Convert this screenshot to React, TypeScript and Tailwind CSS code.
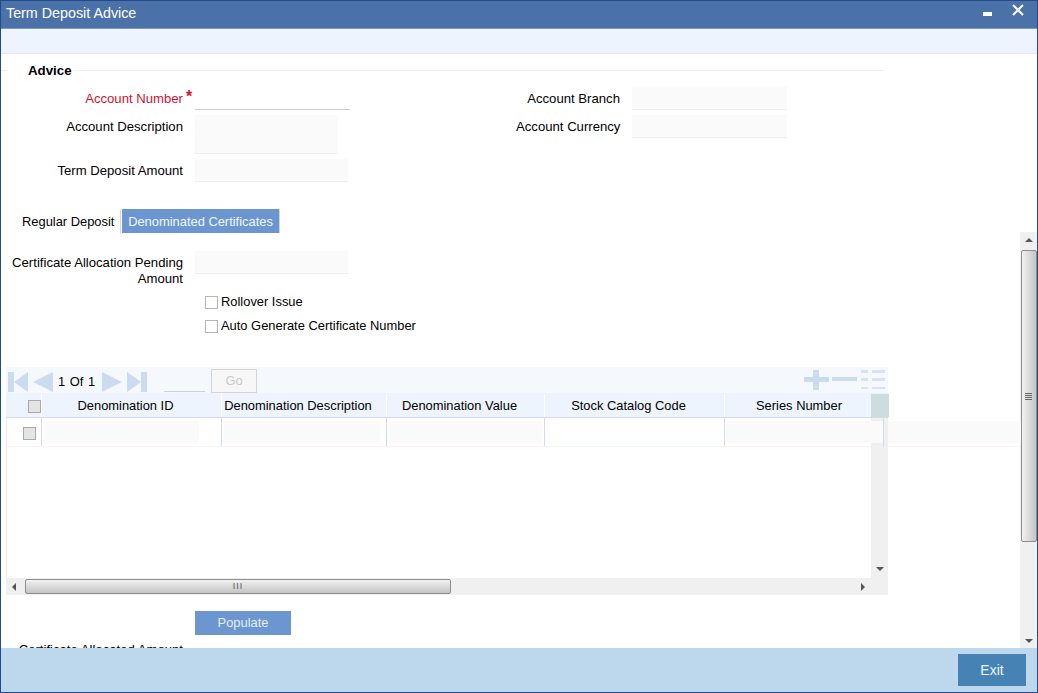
import React from "react";

const columns = [
  { name: "Denomination ID", width: "w-[180px]", input: "w-[155px]" },
  { name: "Denomination Description", width: "w-[165px]", input: "w-[156px]" },
  { name: "Denomination Value", width: "w-[158px]", input: "w-[153px]" },
  { name: "Stock Catalog Code", width: "w-[180px]", input: "w-0" },
];

const Label = ({ children, red }: { children: React.ReactNode; red?: boolean }) => (
  <div className={`w-[182px] shrink-0 text-right text-[13.15px] leading-4 ${red ? "text-[#d2122e]" : "text-black"}`}>{children}</div>
);

const ReadOnly = ({ className }: { className: string }) => (
  <div className={`shrink-0 border-b border-[#eeeeee] bg-[#fafafa] ${className}`} />
);

const Check = ({ className }: { className: string }) => (
  <div className={`h-[13px] w-[13px] shrink-0 border border-[#a9a9a9] ${className}`} />
);

const Triangle = ({ right }: { right?: boolean }) => (
  <svg width="20" height="20" viewBox="0 0 20 20" className="shrink-0">
    <path d={right ? "M0 0L20 10L0 20Z" : "M20 0L0 10L20 20Z"} fill="#cbdcf1" />
  </svg>
);

const EdgeIcon = ({ right }: { right?: boolean }) => (
  <svg width="20" height="20" viewBox="0 0 20 20" className="shrink-0">
    <path d={right ? "M0 0L14 10L0 20Z M14 0H20V20H14Z" : "M20 0L6 10L20 20Z M0 0H6V20H0Z"} fill="#cbdcf1" />
  </svg>
);

const Arrow = ({ dir }: { dir: "up" | "down" | "left" | "right" }) => {
  const d = {
    up: "M0 5L4 1L8 5Z",
    down: "M0 2H8L4 6Z",
    left: "M5 0V8L1 4Z",
    right: "M2 0V8L6 4Z",
  }[dir];
  return (
    <svg width="8" height="8" viewBox="0 0 8 8" className="shrink-0">
      <path d={d} fill="#555555" />
    </svg>
  );
};

const App = () => {
  return (
    <div
      className="flex h-[693px] w-[1038px] flex-col overflow-hidden border border-[#234a8a] bg-white text-[12.9px] text-black"
      style={{ fontFamily: '"Liberation Sans", Arial, sans-serif' }}
    >
      <header className="flex h-[28px] shrink-0 items-start justify-between border-b border-[#7f9ab3] bg-[#4a72a9] pl-[5px] pr-[13px]">
        <span className="mt-[3px] text-[14.3px] leading-[18px] text-white">Term Deposit Advice</span>
        <div className="flex items-start gap-[20px]">
          <div className="mt-[11px] h-[4px] w-[9px] bg-white" />
          <svg width="12" height="12" viewBox="0 0 12 12" className="mt-[3px]">
            <path d="M1 1L11 11M11 1L1 11" stroke="#ffffff" strokeWidth="2" />
          </svg>
        </div>
      </header>
      <div className="h-[25px] shrink-0 border-b border-[#e6e8ec] bg-[#edf4fd]" />

      <div className="flex min-h-0 flex-1 overflow-hidden">
        <main className="w-[1019px] shrink-0">
          <div className="mt-[10px] flex h-[14px] items-start">
            <div className="mt-[6px] h-px w-[6px] bg-[#eeeeee]" />
            <b className="ml-[21px] mr-[1px] text-[13.3px] leading-[14px]">Advice</b>
            <div className="mt-[6px] h-px w-[811px] bg-[#eeeeee]" />
          </div>

          <div className="mt-[9px] flex">
            <div className="w-[515px] shrink-0">
              <div className="flex h-[23px]">
                <Label red>
                  <span className="mt-[4px] block">Account Number</span>
                </Label>
                <span className="relative top-[1px] ml-[3px] w-[9px] text-[16px] font-bold leading-[18px] text-[#d2122e]">*</span>
                <div className="h-[23px] w-[155px] border-b border-[#cfcfcf]" />
              </div>
              <div className="mt-[5px] flex">
                <Label>
                  <span className="mt-[4px] block">Account Description</span>
                </Label>
                <ReadOnly className="ml-[12px] h-[39px] w-[143px]" />
              </div>
              <div className="mt-[5px] flex">
                <Label>
                  <span className="mt-[4px] block">Term Deposit Amount</span>
                </Label>
                <ReadOnly className="ml-[12px] h-[23px] w-[153px]" />
              </div>
            </div>
            <div>
              <div className="flex">
                <div className="mt-[4px] w-[104px] whitespace-nowrap text-right text-[13.15px] leading-4">Account Branch</div>
                <ReadOnly className="ml-[12px] h-[23px] w-[155px]" />
              </div>
              <div className="mt-[5px] flex">
                <div className="mt-[4px] w-[104px] whitespace-nowrap text-right text-[13.15px] leading-4">Account Currency</div>
                <ReadOnly className="ml-[12px] h-[23px] w-[155px]" />
              </div>
            </div>
          </div>

          <div className="mt-[27px] flex h-[24px] items-center">
            <span className="ml-[21px] w-[98px] pt-[1px]">Regular Deposit</span>
            <div className="h-[24px] w-px bg-[#d5d5d5]" />
            <div className="ml-[1px] flex h-[24px] w-[158px] items-center justify-center border-r border-[#d5d5d5] bg-[#6c96d0] pt-[1px] text-[#f2f6fc]">
              Denominated Certificates
            </div>
          </div>

          <div className="mt-[18px] flex">
            <Label>
              <div className="mt-[4px] whitespace-nowrap">
                Certificate Allocation Pending
                <br />
                Amount
              </div>
            </Label>
            <ReadOnly className="ml-[12px] h-[23px] w-[153px]" />
          </div>
          <div className="ml-[204px] mt-[8px] flex flex-col gap-[10px]">
            <label className="flex h-[14px] items-center gap-[3px]">
              <Check className="border-[#b5b5b5] bg-white" />
              <span>Rollover Issue</span>
            </label>
            <label className="flex h-[14px] items-center gap-[3px]">
              <Check className="border-[#b5b5b5] bg-white" />
              <span>Auto Generate Certificate Number</span>
            </label>
          </div>

          <section className="relative ml-[5px] mt-[34px] w-[882px]">
            <div className="flex h-[26px] items-start bg-[#f5f9fe] pl-[2px]">
              <div className="mt-[5px] flex items-center">
                <EdgeIcon />
                <div className="ml-[5px]"><Triangle /></div>
                <span className="ml-[5px] w-[39px] whitespace-nowrap leading-[20px] [word-spacing:1px]">1 Of 1</span>
                <div className="ml-[5px]"><Triangle right /></div>
                <div className="ml-[5px]"><EdgeIcon right /></div>
              </div>
              <div className="ml-[17px] mt-[24px] h-px w-[41px] bg-[#cfcfcf]" />
              <div className="ml-[6px] mt-[2px] flex h-[24px] w-[46px] items-center justify-center border border-[#d5d5d5] bg-[#f7f7f7] text-[#c8c8c8]">
                Go
              </div>
              <div className="ml-auto mr-[2px] mt-[3px] flex items-start gap-[3px]">
                <svg width="25" height="20" viewBox="0 0 25 20">
                  <path d="M0 7H9V0H15V7H25V12H15V20H9V12H0Z" fill="#cbdcf1" />
                </svg>
                <svg width="25" height="20" viewBox="0 0 25 20">
                  <path d="M0 7H25V11H0Z" fill="#cbdcf1" />
                </svg>
                <svg width="25" height="20" viewBox="0 0 25 20" className="ml-[1px]">
                  <path d="M0 0H7V3H0Z M11 0H24V3H11Z M0 8H7V11H0Z M11 8H24V11H11Z M0 17H7V19H0Z M11 17H24V19H11Z" fill="#d5e3f4" />
                </svg>
              </div>
            </div>

            <div className="flex h-[25px] border-b border-[#d3dcea] bg-[#edf4fd] pt-[1px]">
              <div className="flex w-[36px] shrink-0 items-center justify-end border-r border-white pt-[2px]">
                <Check className="border-[#888888] bg-[#e4e4e4]" />
              </div>
              {columns.map((col) => (
                <div key={col.name} className={`flex ${col.width} shrink-0 items-center justify-center border-r border-white pr-[12px]`}>
                  {col.name}
                </div>
              ))}
              <div className="flex w-[146px] shrink-0 items-center justify-center pl-[2px]">Series Number</div>
              <div className="w-[18px] shrink-0 bg-[#cddcdf]" />
            </div>

            <div className="relative h-[160px] border-l border-[#e8eaee]">
              <div className="flex h-[29px] w-[1014px] border-b border-[#fdf3ee]">
                <div className="flex w-[35px] shrink-0 items-center border-r border-[#d3dcea] pl-[16px] pt-[2px]">
                  <Check className="border-[#888888] bg-[#e4e4e4]" />
                </div>
                {columns.map((col) => (
                  <div key={col.name} className={`${col.width} shrink-0 border-r border-[#d3dcea] pl-[2px] pt-[3px]`}>
                    <div className={`h-[22px] ${col.input} bg-[#fafafa]`} />
                  </div>
                ))}
                <div className="flex-1 pl-[1px] pt-[3px]">
                  <div className="h-[22px] bg-[#fafafa]" />
                </div>
              </div>
              <div className="absolute bottom-0 right-0 top-0 flex w-[17px] flex-col items-center justify-end bg-[#f0f0f0] pb-[5px]">
                <div className="absolute left-[12px] top-0 h-[29px] w-px bg-[#d3dcea]" />
                <div className="absolute left-0 top-[3px] h-[22px] w-[12px] bg-[#fafafa]" />
                <Arrow dir="down" />
              </div>
            </div>

            <div className="flex h-[17px] items-center bg-[#f0f0f0] pl-[5px]">
              <Arrow dir="left" />
              <div className="ml-[6px] flex h-[15px] w-[426px] items-center justify-center rounded-[2px] border border-[#8e8e8e] bg-gradient-to-b from-[#f2f2f2] to-[#c4c4c4]">
                <span className="text-[9px] leading-none tracking-[1px] text-[#555555]">III</span>
              </div>
              <div className="ml-auto mr-[21px]"><Arrow dir="right" /></div>
            </div>
          </section>

          <div className="ml-[194px] mt-[16px] flex h-[24px] w-[96px] items-center justify-center bg-[#6c96d0] text-[#e6edf7]">
            Populate
          </div>
          <div className="mt-[7px] w-[182px] whitespace-nowrap text-right text-[13.15px] leading-4">Certificate Allocated Amount</div>
        </main>

        <aside className="mt-[178px] flex w-[17px] shrink-0 flex-col items-center bg-[#f0f0f0]">
          <div className="flex h-[18px] items-center justify-center"><Arrow dir="up" /></div>
          <div className="flex h-[292px] w-[16px] items-center justify-center rounded-[2px] border border-[#8e8e8e] bg-gradient-to-r from-[#f2f2f2] to-[#c4c4c4]">
            <span className="flex flex-col gap-[1px]">
              <i className="block h-px w-[7px] bg-[#666666]" />
              <i className="block h-px w-[7px] bg-[#666666]" />
              <i className="block h-px w-[7px] bg-[#666666]" />
              <i className="block h-px w-[7px] bg-[#666666]" />
            </span>
          </div>
          <div className="mb-[3px] mt-auto"><Arrow dir="down" /></div>
        </aside>
      </div>

      <footer className="flex h-[44px] shrink-0 items-start justify-end bg-[#bdd7ed] pr-[11px] pt-[6px]">
        <div className="flex h-[32px] w-[68px] items-center justify-center bg-[#4682b4] text-[14px] text-[#eaf6ff]">Exit</div>
      </footer>
    </div>
  );
};

export default App;
